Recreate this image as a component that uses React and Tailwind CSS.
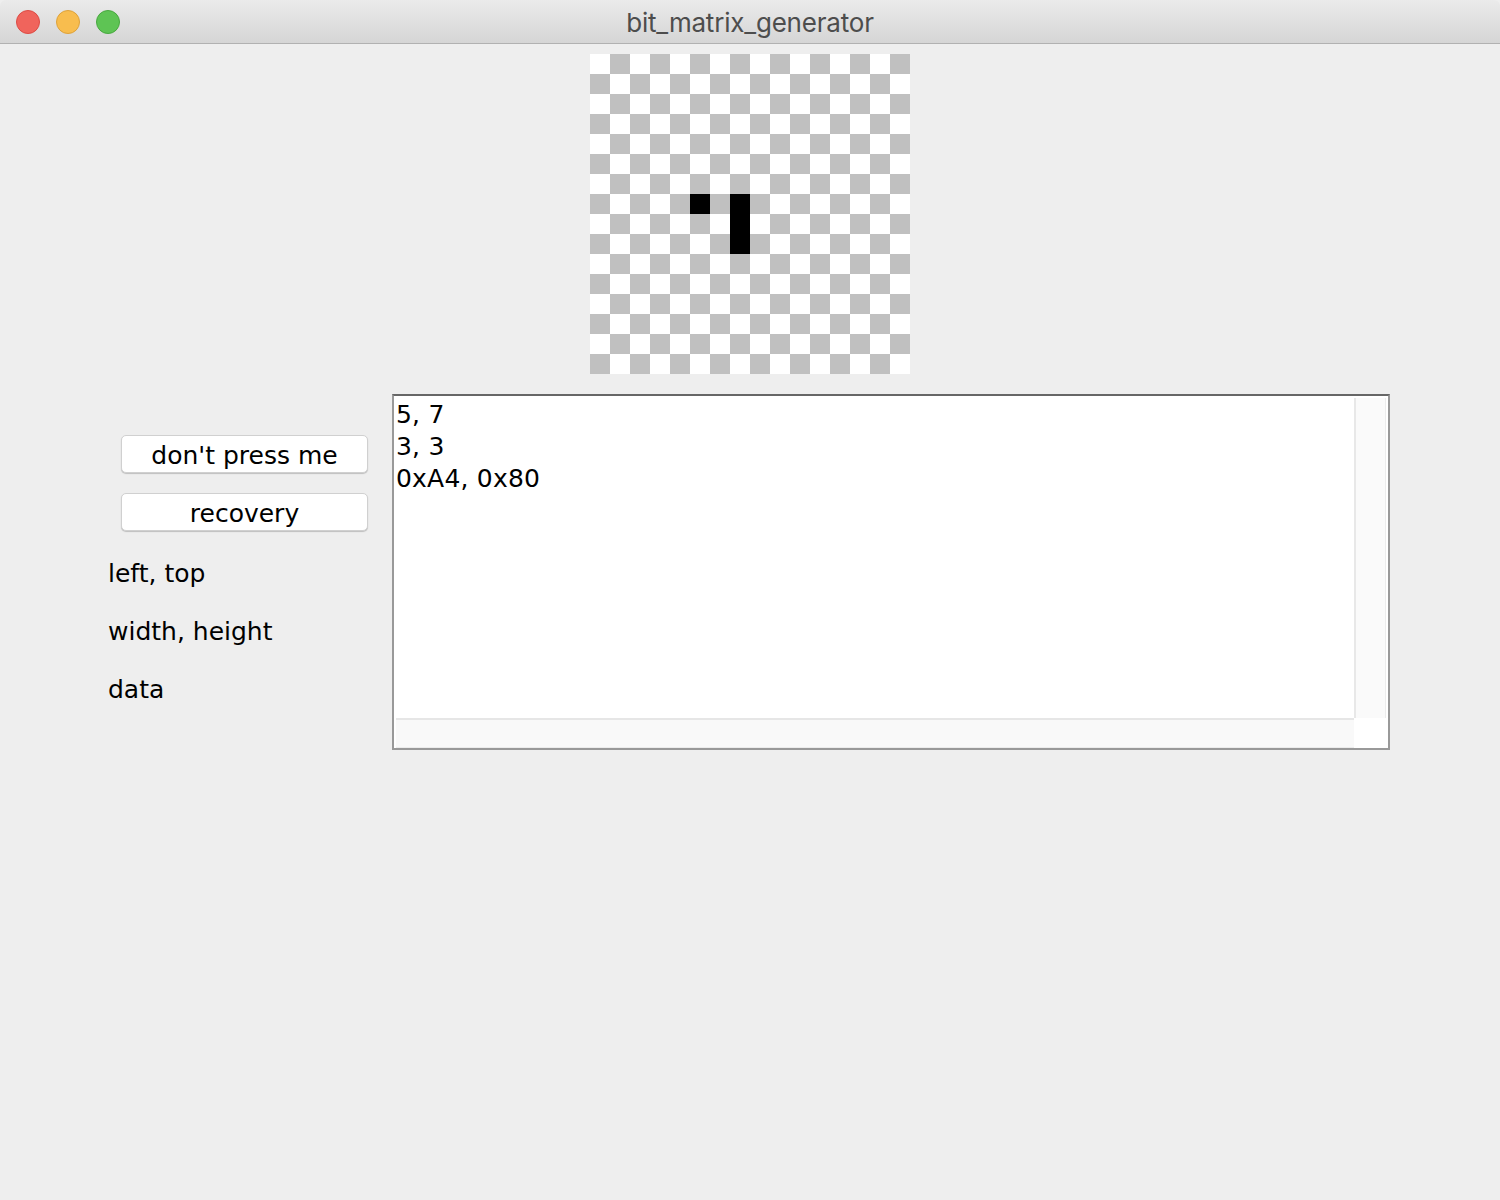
import React from 'react';

// 16x16 grid, cells that are "on"
const ON = new Set([7 * 16 + 5, 7 * 16 + 7, 8 * 16 + 7, 9 * 16 + 7]);

const Checker = () => {
  const cells = [];
  for (let r = 0; r < 16; r++) {
    for (let c = 0; c < 16; c++) {
      const i = r * 16 + c;
      const on = ON.has(i);
      const light = (r + c) % 2 === 0;
      cells.push(
        <div
          key={i}
          className={on ? 'bg-black' : light ? 'bg-white' : 'bg-[#c0c0c0]'}
        />
      );
    }
  }
  return <div className="grid grid-cols-16 grid-rows-16 w-[320px] h-[320px]">{cells}</div>;
};

const Button = ({ children }) => (
  <button className="w-[247px] h-[38px] ml-[13px] pt-[2px] bg-white rounded-[5px] border border-[#d0d0d0] shadow-[0_1px_1px_rgba(0,0,0,0.2)] text-[25px] leading-none text-black">
    {children}
  </button>
);

export default function App() {
  return (
    <div
      className="w-[1500px] h-[1200px] bg-[#eeeeee] flex flex-col"
      style={{ fontFamily: '"DejaVu Sans", sans-serif' }}
    >
      {/* title bar */}
      <div className="relative h-[44px] shrink-0 bg-gradient-to-b from-[#ebebeb] to-[#d5d5d5] border-b border-[#b1b1b1] rounded-t-[6px] flex items-center justify-center">
        <div className="absolute left-[16px] top-[10px] flex gap-[16px]">
          <div className="w-[24px] h-[24px] rounded-full bg-[#f0645c] border border-[#dd4b44]" />
          <div className="w-[24px] h-[24px] rounded-full bg-[#f8bd4e] border border-[#dea23a]" />
          <div className="w-[24px] h-[24px] rounded-full bg-[#5ec454] border border-[#48a83f]" />
        </div>
        <span className="text-[26px] mt-[2px] text-[#4d4d4d] tracking-[-0.2px]" style={{ fontFamily: 'Inter, "Noto Sans", sans-serif' }}>
          bit_matrix_generator
        </span>
      </div>

      {/* matrix preview */}
      <div className="flex justify-center pt-[10px]">
        <Checker />
      </div>

      {/* controls + output */}
      <div className="flex pt-[20px] pl-[108px]">
        <div className="w-[284px] flex flex-col pt-[41px]">
          <div className="flex flex-col gap-[20px]">
            <Button>don't press me</Button>
            <Button>recovery</Button>
          </div>
          <div className="flex flex-col text-[25px] text-black leading-[58px] mt-[14px]">
            <span>left, top</span>
            <span>width, height</span>
            <span>data</span>
          </div>
        </div>

        <div className="w-[998px] h-[356px] bg-white border-2 border-[#999999] border-t-[#666666] flex flex-col">
          <div className="flex-1 flex min-h-0">
            <div className="flex-1 pl-[2px] pt-[3px] text-[25px] leading-[32px] text-black tracking-[0.2px]">
              <div>5, 7</div>
              <div>3, 3</div>
              <div>0xA4, 0x80</div>
            </div>
            <div className="w-[32px] mt-[2px] bg-[#fafafa] border-l-2 border-[#e8e8e8] border-r border-r-[#ececec] mr-[2px]" />
          </div>
          <div className="h-[30px] flex shrink-0">
            <div className="flex-1 ml-[2px] bg-[#f9f9f9] border-t-2 border-[#e6e6e6] border-b border-b-[#ececec]" />
            <div className="w-[34px] bg-white" />
          </div>
        </div>
      </div>
    </div>
  );
}
